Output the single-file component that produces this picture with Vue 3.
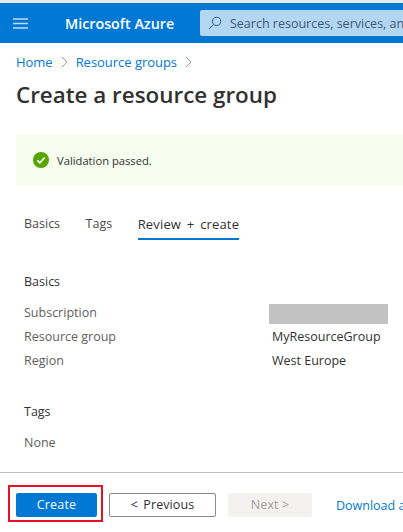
<template>
  <div class="page">
    <header class="topbar">
      <button class="menu" aria-label="Menu">
        <svg width="15" height="11" viewBox="0 0 15 11"><path d="M0 1h15M0 5.5h15M0 10h15" stroke="#bcdcf5" stroke-width="1.4" fill="none"/></svg>
      </button>
      <div class="brand">Microsoft Azure</div>
      <div class="search">
        <svg class="search-icon" width="14" height="14" viewBox="0 0 14 14" fill="none" stroke="#2d5f8f" stroke-width="1"><circle cx="8.6" cy="5.4" r="4.1"/><path d="M5.6 8.3 1 13"/></svg>
        <span>Search resources, services, and docs (G+/)</span>
      </div>
    </header>
    <main class="content">
      <nav class="crumbs">
        <a>Home</a>
        <svg class="chev" width="7" height="12" viewBox="0 0 7 12"><path d="M1 1l5 5-5 5" fill="none" stroke="#9a9a9a"/></svg>
        <a>Resource groups</a>
        <svg class="chev" width="7" height="12" viewBox="0 0 7 12"><path d="M1 1l5 5-5 5" fill="none" stroke="#9a9a9a"/></svg>
      </nav>
      <h1 class="title">Create a resource group</h1>
      <div class="banner">
        <svg width="16" height="16" viewBox="0 0 16 16"><circle cx="8" cy="8" r="8" fill="#57a300"/><path d="M4.3 8.3l2.6 2.5 4.8-5.3" fill="none" stroke="#fff" stroke-width="1.8"/></svg>
        <span>Validation passed.</span>
      </div>
      <div class="tabs">
        <span class="tab">Basics</span>
        <span class="tab">Tags</span>
        <span class="tab active">Review + create</span>
      </div>
      <section class="summary">
        <h2 class="sec">Basics</h2>
        <div class="row"><span class="key">Subscription</span><span class="mask"></span></div>
        <div class="row"><span class="key">Resource group</span><span class="val">MyResourceGroup</span></div>
        <div class="row"><span class="key">Region</span><span class="val">West Europe</span></div>
        <h2 class="sec tags">Tags</h2>
        <div class="row"><span class="key">None</span></div>
      </section>
    </main>
    <footer class="footer">
      <div class="highlight"><button class="btn primary">Create</button></div>
      <button class="btn prev">&lt; Previous</button>
      <button class="btn next">Next &gt;</button>
      <a class="download">Download a template for automation</a>
    </footer>
  </div>
</template>

<script setup>
</script>

<style>
html, body { margin: 0; background: #fff; }
</style>

<style scoped>
.page {
  width: 403px;
  height: 532px;
  overflow: hidden;
  display: flex;
  flex-direction: column;
  background: #fff;
  border-top: 3px solid #e9e9e9;
  box-sizing: border-box;
  font-family: "Open Sans", "Noto Sans", sans-serif;
  font-size: 12.5px;
  color: #323130;
}
.topbar {
  height: 40px;
  flex: none;
  display: flex;
  align-items: center;
  background: #0078d4;
  padding-left: 13px;
}
.menu {
  width: 15px;
  height: 11px;
  padding: 0;
  border: 0;
  background: none;
  display: flex;
}
.brand {
  margin-left: 37px;
  width: 135px;
  flex: none;
  color: #fff;
  font-size: 14.3px;
  font-weight: 600;
  white-space: nowrap;
}
.search {
  flex: none;
  width: 240px;
  height: 26px;
  display: flex;
  align-items: center;
  gap: 8px;
  padding-left: 8px;
  box-sizing: border-box;
  background: #b3d6f2;
  border-radius: 2px;
  color: #3b5a78;
  font-size: 12.5px;
  white-space: nowrap;
  overflow: hidden;
}
.search-icon {
  flex: none;
}
.content {
  flex: 1;
  min-height: 0;
  display: flex;
  flex-direction: column;
}
.crumbs {
  display: flex;
  align-items: center;
  gap: 8px;
  margin: 10px 0 0 16px;
  height: 18px;
  color: #0078d4;
  font-size: 13px;
  letter-spacing: -0.03px;
}
.title {
  margin: 7px 0 0 16px;
  height: 34px;
  line-height: 34px;
  font-size: 22.4px;
  font-weight: 600;
  color: #323130;
  white-space: nowrap;
}
.banner {
  margin: 23px 0 0 16px;
  height: 50px;
  display: flex;
  align-items: center;
  gap: 8px;
  padding-left: 17px;
  background: #f6fdee;
  font-size: 11.2px;
}
.tabs {
  margin: 29px 0 0 24px;
  display: flex;
  gap: 25.5px;
  height: 26px;
  line-height: 20px;
}
.tab {
  box-sizing: border-box;
  color: #4a4948;
  white-space: nowrap;
}
.active {
  color: #323130;
  font-size: 13px;
  font-weight: 500;
  word-spacing: 2.2px;
  letter-spacing: 0.16px;
  border-bottom: 2px solid #0078d4;
}
.summary {
  margin: 33px 0 0 24px;
}
.sec {
  margin: 0;
  height: 18px;
  line-height: 18px;
  font-size: 12.5px;
  font-weight: 400;
  color: #323130;
}
.tags {
  margin-top: 33px;
}
.row {
  margin-top: 6px;
  height: 18px;
  line-height: 18px;
  display: flex;
  color: #605e5c;
  white-space: nowrap;
}
.sec + .row {
  margin-top: 13px;
}
.key {
  width: 245px;
  flex: none;
}
.val {
  margin-left: 3px;
  color: #323130;
}
.mask {
  width: 119px;
  height: 20px;
  background: #c2c2c2;
}
.footer {
  flex: none;
  height: 60px;
  box-sizing: border-box;
  display: flex;
  align-items: flex-start;
  border-top: 1px solid #bdbdbd;
  padding: 12px 0 0 8px;
  white-space: nowrap;
}
.highlight {
  flex: none;
  box-sizing: border-box;
  width: 95px;
  height: 37px;
  padding: 6px;
  border: 2px solid #e81123;
  display: flex;
}
.btn {
  flex: none;
  height: 24px;
  padding: 0;
  box-sizing: border-box;
  border-radius: 2px;
  font: inherit;
  font-size: 12.5px;
  line-height: 1;
}
.primary {
  width: 81px;
  background: #0078d4;
  color: #fff;
  border: 0;
  letter-spacing: 0.15px;
}
.prev {
  margin: 8px 0 0 6px;
  padding-top: 1px;
  width: 107px;
  background: #fff;
  color: #323130;
  border: 1px solid #8a8886;
  word-spacing: 2px;
  letter-spacing: 0.1px;
}
.next {
  margin: 8px 0 0 12px;
  padding-top: 1px;
  width: 84px;
  background: #f3f2f1;
  color: #a19f9d;
  border: 0;
  letter-spacing: 0.1px;
}
.download {
  margin: 12px 0 0 24px;
  color: #0078d4;
  font-size: 12.5px;
}
</style>
